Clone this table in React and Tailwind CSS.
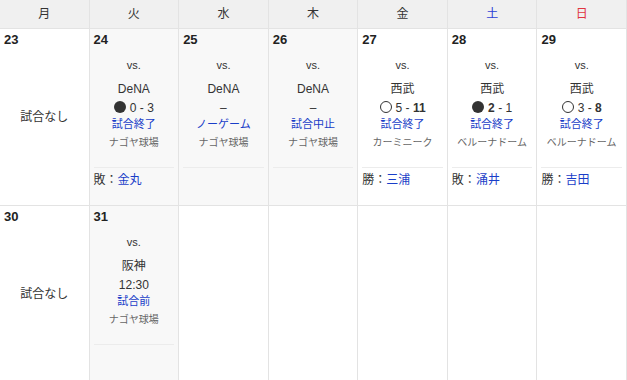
const days = ['月', '火', '水', '木', '金', '土', '日'];

const weeks = [
  [
    { d: 23, none: true },
    { d: 24, home: true, team: 'DeNA', mark: 'lose', score: [['0'], ['3']], status: '試合終了', venue: 'ナゴヤ球場', pitcher: ['敗', '金丸'] },
    { d: 25, home: true, team: 'DeNA', dash: true, status: 'ノーゲーム', venue: 'ナゴヤ球場' },
    { d: 26, home: true, team: 'DeNA', dash: true, status: '試合中止', venue: 'ナゴヤ球場' },
    { d: 27, team: '西武', mark: 'win', score: [['5'], ['11', true]], status: '試合終了', venue: 'カーミニーク', pitcher: ['勝', '三浦'] },
    { d: 28, team: '西武', mark: 'lose', score: [['2', true], ['1']], status: '試合終了', venue: 'ベルーナドーム', pitcher: ['敗', '涌井'] },
    { d: 29, team: '西武', mark: 'win', score: [['3'], ['8', true]], status: '試合終了', venue: 'ベルーナドーム', pitcher: ['勝', '吉田'] },
  ],
  [
    { d: 30, none: true },
    { d: 31, home: true, team: '阪神', time: '12:30', status: '試合前', venue: 'ナゴヤ球場' },
    {}, {}, {}, {}, {},
  ],
];

function Mark({ type }) {
  if (type === 'lose') {
    return <span className="inline-block w-[12px] h-[12px] rounded-full bg-[#333] align-[-1px] mr-[4px]" />;
  }
  return <span className="inline-block w-[12px] h-[12px] rounded-full border border-[#333] align-[-1px] mr-[4px]" />;
}

function Cell({ c }) {
  return (
    <div className={`h-[177px] border-r border-b border-[#e3e3e3] px-[4px] pt-[3px] flex flex-col ${c.home ? 'bg-[#f8f8f8]' : 'bg-white'}`}>
      {c.d && <div className="text-[13px] font-bold leading-[16px] text-[#222]">{c.d}</div>}
      {c.none && (
        <div className="flex-1 flex items-center justify-center mb-[19px] text-[12px] text-[#333]">試合なし</div>
      )}
      {c.team && (
        <div className="text-center text-[#333]">
          <div className="mt-[10px] text-[11px] leading-[14px]">vs.</div>
          <div className="mt-[9px] text-[12px] leading-[16px]">{c.team}</div>
          <div className="mt-[3px] text-[12px] leading-[16px]">
            {c.mark && <Mark type={c.mark} />}
            {c.score && (
              <>
                <span className={c.score[0][1] ? 'font-bold' : ''}>{c.score[0][0]}</span>
                {' - '}
                <span className={c.score[1][1] ? 'font-bold' : ''}>{c.score[1][0]}</span>
              </>
            )}
            {c.dash && '–'}
            {c.time}
          </div>
          <div className="text-[11px] leading-[16px] text-[#1a3ec8]">{c.status}</div>
          <div className="mt-[4px] text-[10px] leading-[14px] text-[#666]">{c.venue}</div>
          <div className="mt-[17px] border-t border-[#ececec]" />
          {c.pitcher && (
            <div className="mt-[4px] text-left text-[12px] leading-[16px]">
              {c.pitcher[0]}：<span className="text-[#1a3ec8]">{c.pitcher[1]}</span>
            </div>
          )}
        </div>
      )}
    </div>
  );
}

export default function App() {
  return (
    <div className="w-[627px] h-[380px] overflow-hidden bg-white" style={{ fontFamily: '"Liberation Sans", "Noto Sans CJK JP", sans-serif' }}>
      <div className="grid grid-cols-7">
        {days.map((d, i) => (
          <div
            key={d}
            className={`h-[29px] bg-[#f0f0f0] border-r border-b border-[#e3e3e3] flex items-center justify-center text-[12px] ${i === 5 ? 'text-[#2e3fd6]' : i === 6 ? 'text-[#e0353f]' : 'text-[#333]'}`}
          >
            {d}
          </div>
        ))}
        {weeks.map((w) => w.map((c, i) => <Cell key={`${w[0].d}-${i}`} c={c} />))}
      </div>
    </div>
  );
}
